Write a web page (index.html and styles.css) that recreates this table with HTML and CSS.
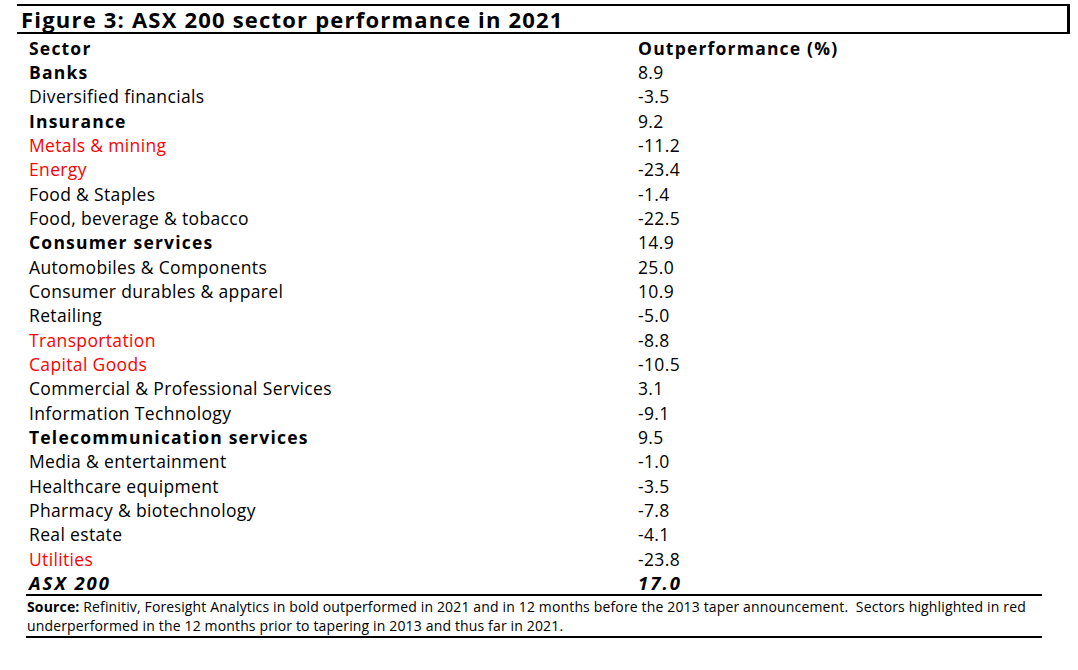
FILE: index.html
```html
<!DOCTYPE html>
<html>
<head>
<meta charset="utf-8">
<link rel="stylesheet" href="styles.css">
</head>
<body>
<div class="figure">
  <div class="title">Figure 3: ASX 200 sector performance in 2021</div>
  <div class="table">
    <div class="row head"><span class="c1">Sector</span><span class="c2">Outperformance (%)</span></div>
    <div class="row bold"><span class="c1">Banks</span><span class="c2">8.9</span></div>
    <div class="row"><span class="c1">Diversified financials</span><span class="c2">-3.5</span></div>
    <div class="row bold"><span class="c1">Insurance</span><span class="c2">9.2</span></div>
    <div class="row red"><span class="c1">Metals &amp; mining</span><span class="c2">-11.2</span></div>
    <div class="row red"><span class="c1">Energy</span><span class="c2">-23.4</span></div>
    <div class="row"><span class="c1">Food &amp; Staples</span><span class="c2">-1.4</span></div>
    <div class="row"><span class="c1">Food, beverage &amp; tobacco</span><span class="c2">-22.5</span></div>
    <div class="row bold"><span class="c1">Consumer services</span><span class="c2">14.9</span></div>
    <div class="row"><span class="c1">Automobiles &amp; Components</span><span class="c2">25.0</span></div>
    <div class="row"><span class="c1">Consumer durables &amp; apparel</span><span class="c2">10.9</span></div>
    <div class="row"><span class="c1">Retailing</span><span class="c2">-5.0</span></div>
    <div class="row red"><span class="c1">Transportation</span><span class="c2">-8.8</span></div>
    <div class="row red"><span class="c1">Capital Goods</span><span class="c2">-10.5</span></div>
    <div class="row"><span class="c1">Commercial &amp; Professional Services</span><span class="c2">3.1</span></div>
    <div class="row"><span class="c1">Information Technology</span><span class="c2">-9.1</span></div>
    <div class="row bold"><span class="c1">Telecommunication services</span><span class="c2">9.5</span></div>
    <div class="row"><span class="c1">Media &amp; entertainment</span><span class="c2">-1.0</span></div>
    <div class="row"><span class="c1">Healthcare equipment</span><span class="c2">-3.5</span></div>
    <div class="row"><span class="c1">Pharmacy &amp; biotechnology</span><span class="c2">-7.8</span></div>
    <div class="row"><span class="c1">Real estate</span><span class="c2">-4.1</span></div>
    <div class="row red"><span class="c1">Utilities</span><span class="c2">-23.8</span></div>
    <div class="row total"><span class="c1">ASX 200</span><span class="c2">17.0</span></div>
  </div>
  <div class="source"><b>Source:</b> Refinitiv, Foresight Analytics in bold outperformed in 2021 and in 12 months before the 2013 taper announcement.&nbsp; Sectors highlighted in red<br>underperformed in the 12 months prior to tapering in 2013 and thus far in 2021.</div>
</div>
</body>
</html>
```
FILE: styles.css
```css
html, body {
  margin: 0;
  padding: 0;
  background: #ffffff;
}
body {
  font-family: "Open Sans", Lato, sans-serif;
  color: #000000;
}
.figure {
  padding-top: 4px;
}
.title {
  margin-left: 17px;
  width: 1046px;
  height: 26px;
  border-top: 2px solid #000;
  border-bottom: 2px solid #000;
  border-right: 3px solid #000;
  padding-left: 4px;
  font-size: 22px;
  font-weight: 700;
  letter-spacing: 1.2px;
  line-height: 27px;
  white-space: nowrap;
}
.table {
  margin-left: 26px;
  width: 1015px;
}
.row {
  display: flex;
  box-sizing: border-box;
  height: 24.35px;
  padding-top: 1.5px;
  line-height: 24px;
  font-size: 17.5px;
  letter-spacing: 0.35px;
  white-space: nowrap;
}
.c1 {
  width: 609px;
  padding-left: 3px;
}
.c2 {
  flex: 1;
  color: #000;
}
.head .c1, .head .c2, .bold .c1 {
  font-weight: 700;
  letter-spacing: 1.2px;
}
.red .c1 {
  color: #ff0000;
}
.total .c1, .total .c2 {
  font-size: 18.5px;
  font-weight: 700;
  font-style: italic;
  letter-spacing: 2px;
}
.source {
  margin-left: 26px;
  width: 1015px;
  border-top: 2px solid #000;
  border-bottom: 2px solid #000;
  padding: 1px 0 1px 1px;
  font-size: 14px;
  letter-spacing: 0.15px;
  line-height: 19px;
  white-space: nowrap;
}
```
